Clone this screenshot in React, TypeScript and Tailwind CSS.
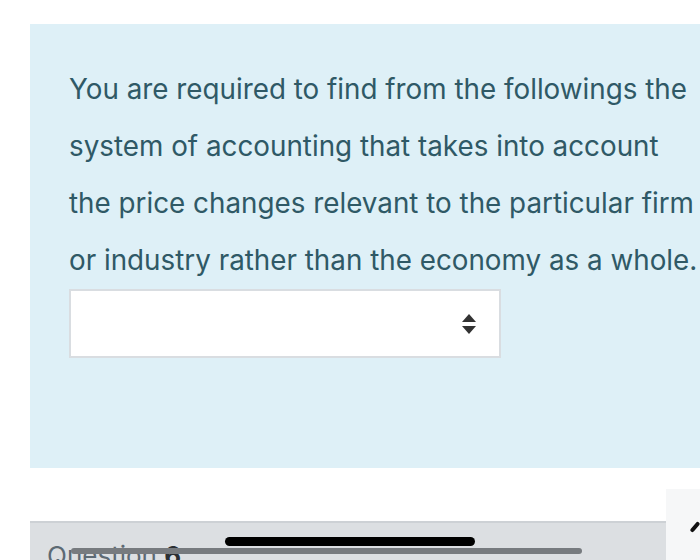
import React from 'react';

const lines = [
  'You are required to find from the followings the',
  'system of accounting that takes into account',
  'the price changes relevant to the particular firm',
  'or industry rather than the economy as a whole.',
];

export default function App() {
  return (
    <div
      className="relative w-[700px] h-[560px] overflow-hidden bg-white"
      style={{ fontFamily: 'Inter, "Liberation Sans", sans-serif' }}
    >
      <div className="ml-[30px] mt-[24px] h-[444px] bg-[#def0f7] pl-[39px] pt-[37px]">
        <div className="text-[27.8px] leading-[57px] text-[#2f5966] whitespace-nowrap">
          {lines.map((l) => (
            <div key={l}>{l}</div>
          ))}
        </div>
        <div className="w-[432px] h-[69px] bg-white border-2 border-[#d9dde1] flex items-center justify-end pr-[22px]">
          <svg width="16" height="22" viewBox="0 0 16 22">
            <path d="M8 1 L15 9 L1 9 Z" fill="#333" />
            <path d="M1 13 L15 13 L8 21 Z" fill="#333" />
          </svg>
        </div>
      </div>

      <div className="flex mt-[21px]">
        <div className="w-[30px]" />
        <div className="w-[636px] h-[39px] mt-[32px] bg-[#dcdfe2] border-t-2 border-[#cdd1d5] pl-[17px] pt-[20px]">
          <span className="text-[26px] leading-none text-[#5d6a74]">
            Question <span className="font-bold text-[#2b2f33]">6</span>
          </span>
        </div>
        <div className="relative w-[34px] h-[71px] bg-[#f6f7f8]">
          <div className="absolute left-[27px] top-[32px] w-[4px] h-[12px] bg-[#111] rotate-[40deg] rounded-full" />
        </div>
      </div>

      {/* overlays */}
      <div className="absolute left-[225px] top-[537px] w-[250px] h-[9px] rounded-full bg-black" />
      <div className="absolute left-[71px] top-[548px] w-[511px] h-[6px] rounded-full bg-[#777b7f]" />
    </div>
  );
}
